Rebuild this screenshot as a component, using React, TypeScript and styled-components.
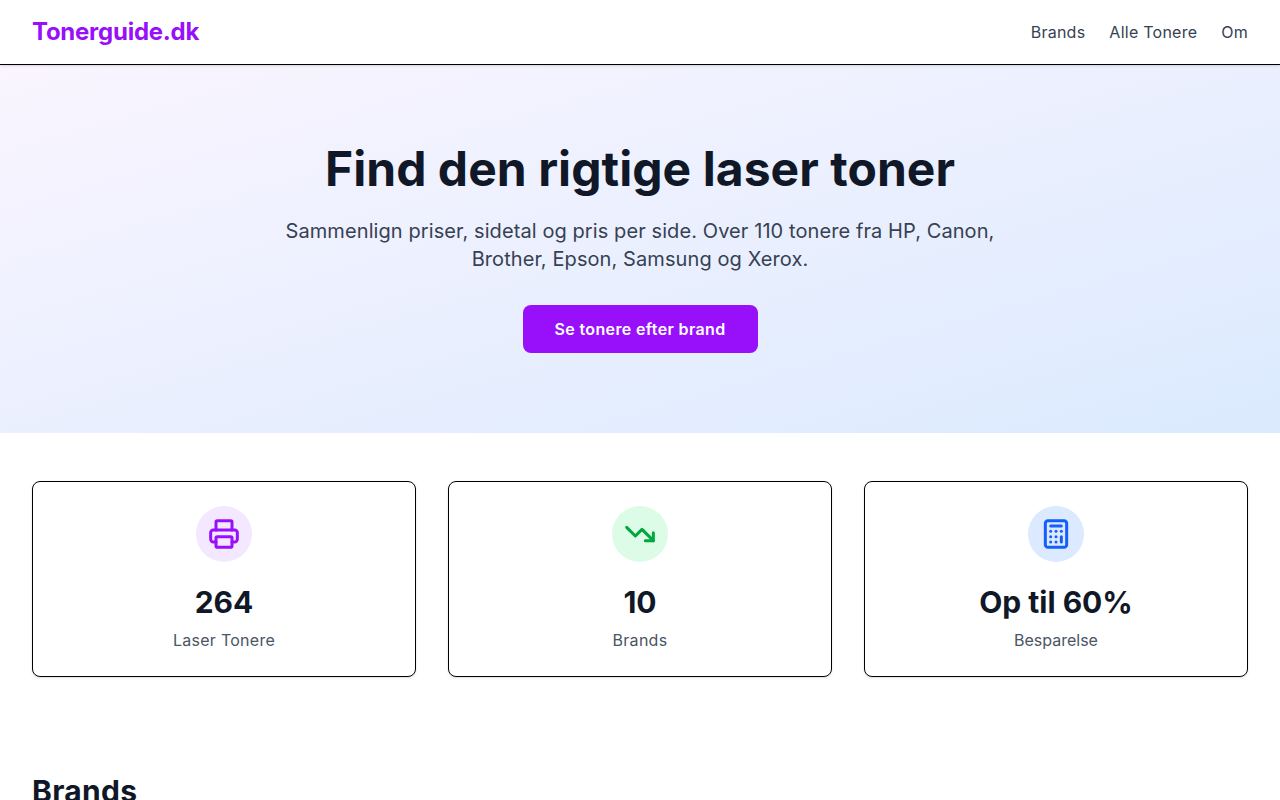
import React from "react";
import styled, { createGlobalStyle } from "styled-components";
import { Printer, TrendingDown, Calculator } from "lucide-react";

const GlobalStyle = createGlobalStyle`
  * {
    box-sizing: border-box;
  }
  body {
    margin: 0;
    background: #ffffff;
    font-family: Inter, "Liberation Sans", sans-serif;
    color: #101828;
  }
`;

const Header = styled.header`
  position: sticky;
  top: 0;
  z-index: 10;
  height: 65px;
  padding: 0 32px;
  display: flex;
  align-items: center;
  justify-content: space-between;
  background: #ffffff;
  border-bottom: 1px solid #000000;
  box-shadow: 0 1px 3px rgba(0, 0, 0, 0.1), 0 1px 2px -1px rgba(0, 0, 0, 0.1);
`;

const Logo = styled.a`
  font-size: 24px;
  line-height: 32px;
  font-weight: 700;
  letter-spacing: -0.25px;
  color: #9810fa;
`;

const Nav = styled.nav`
  display: flex;
  gap: 24px;
`;

const NavLink = styled.a`
  font-size: 16px;
  line-height: 24px;
  font-weight: 400;
  letter-spacing: 0.25px;
  color: #364153;
`;

const Hero = styled.section`
  padding: 80px 32px;
  display: flex;
  flex-direction: column;
  align-items: center;
  text-align: center;
  background: linear-gradient(to bottom right, #faf5ff, #dbeafe);
`;

const HeroTitle = styled.h1`
  margin: 0 0 24px;
  font-size: 48px;
  line-height: 48px;
  font-weight: 700;
  letter-spacing: 0.05px;
  color: #101828;
`;

const HeroText = styled.p`
  margin: 0 0 32px;
  max-width: 768px;
  font-size: 20px;
  line-height: 28px;
  letter-spacing: 0.09px;
  color: #364153;
`;

const HeroButton = styled.a`
  height: 48px;
  padding: 0 32px;
  display: flex;
  align-items: center;
  border-radius: 8px;
  background: #9810fa;
  color: #ffffff;
  font-size: 16px;
  font-weight: 600;
  letter-spacing: 0.36px;
`;

const Stats = styled.section`
  padding: 48px 32px;
  display: grid;
  grid-template-columns: repeat(3, 1fr);
  gap: 32px;
`;

const StatCard = styled.div`
  height: 196px;
  padding: 24px;
  display: flex;
  flex-direction: column;
  align-items: center;
  background: #ffffff;
  border: 1px solid #000000;
  border-radius: 8px;
  box-shadow: 0 1px 3px rgba(0, 0, 0, 0.1), 0 1px 2px -1px rgba(0, 0, 0, 0.1);
`;

const IconCircle = styled.div<{ $bg: string; $fg: string }>`
  width: 56px;
  height: 56px;
  margin-bottom: 16px;
  display: flex;
  align-items: center;
  justify-content: center;
  border-radius: 50%;
  background: ${({ $bg }) => $bg};
  color: ${({ $fg }) => $fg};
`;

const StatValue = styled.div`
  margin-bottom: 2px;
  font-size: 30px;
  line-height: 48px;
  font-weight: 700;
  color: #101828;
`;

const StatLabel = styled.div<{ $tracking: number }>`
  font-size: 16px;
  line-height: 24px;
  letter-spacing: ${({ $tracking }) => $tracking}px;
  color: #4a5565;
`;

const BrandSection = styled.section`
  padding: 48px 32px;
`;

const SectionTitle = styled.h2`
  margin: 0;
  font-size: 30px;
  line-height: 36px;
  font-weight: 700;
  letter-spacing: 0.3px;
  color: #101828;
`;

const stats = [
  { icon: Printer, bg: "#f3e8ff", fg: "#9810fa", value: "264", label: "Laser Tonere", tracking: 0.28 },
  { icon: TrendingDown, bg: "#dcfce7", fg: "#00a63e", value: "10", label: "Brands", tracking: 0.28 },
  { icon: Calculator, bg: "#dbeafe", fg: "#155dfc", value: "Op til 60%", label: "Besparelse", tracking: 0 },
];

export default function App() {
  return (
    <>
      <GlobalStyle />
      <Header>
        <Logo>Tonerguide.dk</Logo>
        <Nav>
          <NavLink>Brands</NavLink>
          <NavLink>Alle Tonere</NavLink>
          <NavLink>Om</NavLink>
        </Nav>
      </Header>
      <Hero>
        <HeroTitle>Find den rigtige laser toner</HeroTitle>
        <HeroText>
          Sammenlign priser, sidetal og pris per side. Over 110 tonere fra HP, Canon, Brother,
          Epson, Samsung og Xerox.
        </HeroText>
        <HeroButton>Se tonere efter brand</HeroButton>
      </Hero>
      <Stats>
        {stats.map((s) => (
          <StatCard key={s.label}>
            <IconCircle $bg={s.bg} $fg={s.fg}>
              <s.icon size={32} strokeWidth={2.25} />
            </IconCircle>
            <StatValue>{s.value}</StatValue>
            <StatLabel $tracking={s.tracking}>{s.label}</StatLabel>
          </StatCard>
        ))}
      </Stats>
      <BrandSection>
        <SectionTitle>Brands</SectionTitle>
      </BrandSection>
    </>
  );
}
